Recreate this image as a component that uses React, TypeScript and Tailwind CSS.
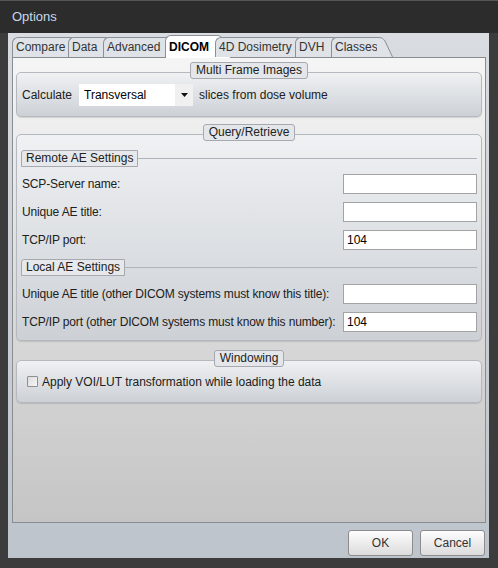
import type { ReactNode } from 'react';

const tabs = [
  { label: 'Compare', w: 'w-[56px]' },
  { label: 'Data', w: 'w-[35px]' },
  { label: 'Advanced', w: 'w-[62px]' },
  { label: 'DICOM', w: 'w-[50px]', active: true },
  { label: '4D Dosimetry', w: 'w-[80px]' },
  { label: 'DVH', w: 'w-[36px]' },
  { label: 'Classes', w: 'w-[46px]' },
];

function Tab({ label, w, active }: { label: string; w: string; active?: boolean }) {
  const h = active ? 23 : 20;
  return (
    <div
      className={`relative ${w} ${
        active
          ? '-mb-px h-[23px] bg-white pt-[2px] font-bold text-black'
          : 'h-[20px] bg-[#dfe2e6] text-[#333]'
      } rounded-tl-[6px] border-l border-t border-[#8b9096] pl-[3px] leading-[19px] whitespace-nowrap`}
    >
      {label}
      <svg className="absolute left-full top-[-1px]" width="16" height={h}>
        <path
          d={`M0,0.5 H2 C5,0.5 6,1.5 8,4 L15.5,${h} H0 Z`}
          fill={active ? '#ffffff' : '#dfe2e6'}
        />
        <path d={`M0,0.5 H2 C5,0.5 6,1.5 8,4 L15.5,${h}`} fill="none" stroke="#8b9096" />
      </svg>
    </div>
  );
}

function Group({ title, children, className }: { title: string; children: ReactNode; className: string }) {
  return (
    <div className="flex flex-col">
      <div className="relative z-10 mx-auto h-[17px] rounded-[3px] border border-[#a6aab0] bg-[#e4e6e9] px-[5px] leading-[15px] text-[#222]">
        {title}
      </div>
      <div
        className={`-mt-[7px] rounded-[5px] border border-[#b5b9bf] bg-linear-to-b from-[#eff1f3] to-[#cdd1d6] shadow-[0_1px_1px_rgba(0,0,0,0.12)] ${className}`}
      >
        {children}
      </div>
    </div>
  );
}

function SubHeader({ title }: { title: string }) {
  return (
    <div className="flex items-center">
      <div className="h-[17px] rounded-tl-[3px] border border-[#a6aab0] bg-[#e6e8eb] px-[4px] leading-[15px] text-[#222]">
        {title}
      </div>
      <div className="h-px flex-1 bg-[#b0b4b9]" />
    </div>
  );
}

function Row({ label, value }: { label: string; value?: string }) {
  return (
    <div className="flex h-[20px] items-center justify-between pl-[1px]">
      <span className="whitespace-nowrap tracking-[-0.15px]">{label}</span>
      <div className="h-[20px] w-[134px] shrink-0 border border-[#a3a3a3] bg-white pl-[3px] leading-[18px] text-black">
        {value}
      </div>
    </div>
  );
}

export default function App() {
  return (
    <div className="flex h-[568px] w-[498px] flex-col bg-[#3c3c3c] font-['Liberation_Sans',Arial,sans-serif] text-[12px] text-[#202020]">
      {/* title bar */}
      <div className="flex h-[33px] items-center border-t border-[#555] bg-[#2c2c2c] pl-[12px] pb-[1px] text-[13px] text-[#c8d9ea]">
        Options
      </div>

      <div className="mb-[10px] ml-[8px] mr-[9px] flex flex-1 flex-col bg-linear-to-b from-[#d9dce0] to-[#bec4cc] pl-[4px] pr-[3px]">
        {/* tab strip */}
        <div className="flex h-[24px] items-end">
          {tabs.map((t) => (
            <Tab key={t.label} {...t} />
          ))}
        </div>

        {/* tab page */}
        <div className="flex flex-1 flex-col border border-[#898d92] bg-linear-to-b from-[#f5f5f5] to-[#c5c5c5] px-[3px] pt-[4px]">
          <Group title="Multi Frame Images" className="flex h-[45px] items-center px-[5px]">
            <span>Calculate</span>
            <div className="ml-[7px] flex h-[22px] w-[114px] items-center bg-white text-black">
              <span className="flex-1 pl-[5px]">Transversal</span>
              <div className="flex h-full w-[18px] items-center justify-center bg-[#f0f0f0]">
                <svg width="7" height="4">
                  <path d="M0 0H7L3.5 4Z" fill="#111" />
                </svg>
              </div>
            </div>
            <span className="ml-[6px]">slices from dose volume</span>
          </Group>

          <div className="mt-[7px]">
            <Group title="Query/Retrieve" className="flex flex-col px-[4px] pt-[15px] pb-[8px]">
              <SubHeader title="Remote AE Settings" />
              <div className="mt-[7px] flex flex-col gap-[8px]">
                <Row label="SCP-Server name:" />
                <Row label="Unique AE title:" />
                <Row label="TCP/IP port:" value="104" />
              </div>
              <div className="mt-[9px]">
                <SubHeader title="Local AE Settings" />
              </div>
              <div className="mt-[8px] flex flex-col gap-[8px]">
                <Row label="Unique AE title (other DICOM systems must know this title):" />
                <Row label="TCP/IP port (other DICOM systems must know this number):" value="104" />
              </div>
            </Group>
          </div>

          <div className="mt-[9px]">
            <Group title="Windowing" className="flex h-[43px] items-center gap-[4px] pl-[10px]">
              <div className="h-[11px] w-[11px] rounded-[1px] border border-[#8e8f8f] bg-linear-to-br from-[#dcdcdc] to-[#f6f6f6]" />
              <span>Apply VOI/LUT transformation while loading the data</span>
            </Group>
          </div>
        </div>

        {/* footer */}
        <div className="flex h-[35px] justify-end gap-[7px] pt-[7px] pr-px">
          <button className="h-[26px] w-[65px] rounded-[3px] border border-[#8c8c8c] bg-linear-to-b from-[#fdfdfd] to-[#dcdcdc] text-[#333]">
            OK
          </button>
          <button className="h-[26px] w-[65px] rounded-[3px] border border-[#8c8c8c] bg-linear-to-b from-[#fdfdfd] to-[#dcdcdc] text-[#333]">
            Cancel
          </button>
        </div>
      </div>
    </div>
  );
}
